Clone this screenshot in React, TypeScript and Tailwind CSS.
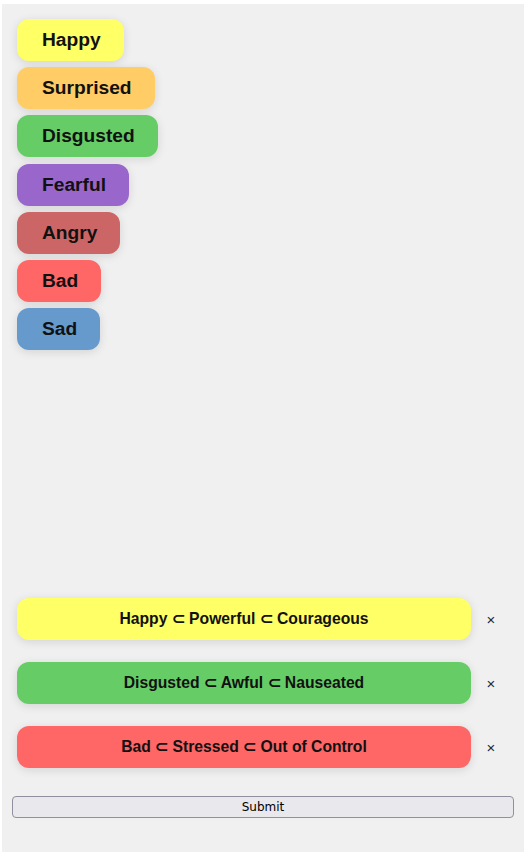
import React from "react";

const emotions = [
  { name: "Happy", bg: "bg-[#ffff66]" },
  { name: "Surprised", bg: "bg-[#ffcc66]" },
  { name: "Disgusted", bg: "bg-[#66cc66]" },
  { name: "Fearful", bg: "bg-[#9966cc]" },
  { name: "Angry", bg: "bg-[#cc6666]" },
  { name: "Bad", bg: "bg-[#ff6666]" },
  { name: "Sad", bg: "bg-[#6699cc]" },
];

const selected = [
  { text: "Happy ⊂ Powerful ⊂ Courageous", bg: "bg-[#ffff66]" },
  { text: "Disgusted ⊂ Awful ⊂ Nauseated", bg: "bg-[#66cc66]" },
  { text: "Bad ⊂ Stressed ⊂ Out of Control", bg: "bg-[#ff6666]" },
];

export default function App() {
  return (
    <div className="w-[530px] h-[858px] bg-white pt-[4px] pl-[2px]" style={{ fontFamily: '"Liberation Sans", Arial, sans-serif' }}>
      <div className="w-[522px] h-[848px] bg-[#f0f0f0] flex flex-col pt-[10px] pb-[34px] px-[10px]">
        <div className="flex flex-col items-start gap-[6.2px] p-[5px]">
          {emotions.map((e) => (
            <div
              key={e.name}
              className={`${e.bg} rounded-[12px] pl-[25px] pr-[23px] py-[10px] text-[19.2px] leading-[22px] font-bold text-[#111] shadow-[0_2px_10px_rgba(0,0,0,0.12)]`}
            >
              {e.name}
            </div>
          ))}
        </div>
        <div className="flex-1" />
        <div className="flex flex-col gap-[12px]">
          {selected.map((s) => (
            <div key={s.text} className="flex items-center">
              <div
                className={`${s.bg} flex-1 m-[5px] rounded-[12px] h-[42px] flex items-center justify-center text-[15.7px] font-bold text-[#111] shadow-[0_2px_10px_rgba(0,0,0,0.12)]`}
              >
                {s.text}
              </div>
              <div className="w-[30px] mr-[8px] text-center text-[15px] text-[#1a2a3a] leading-none">×</div>
            </div>
          ))}
        </div>
        <button className="mt-[23px] h-[22px] w-full bg-[#e9e9ed] border border-[#8f8f9d] rounded-[4px] text-[13px] text-black leading-none" style={{ fontFamily: '"DejaVu Sans", Verdana, sans-serif', fontSize: "12px" }}>
          Submit
        </button>
      </div>
    </div>
  );
}
